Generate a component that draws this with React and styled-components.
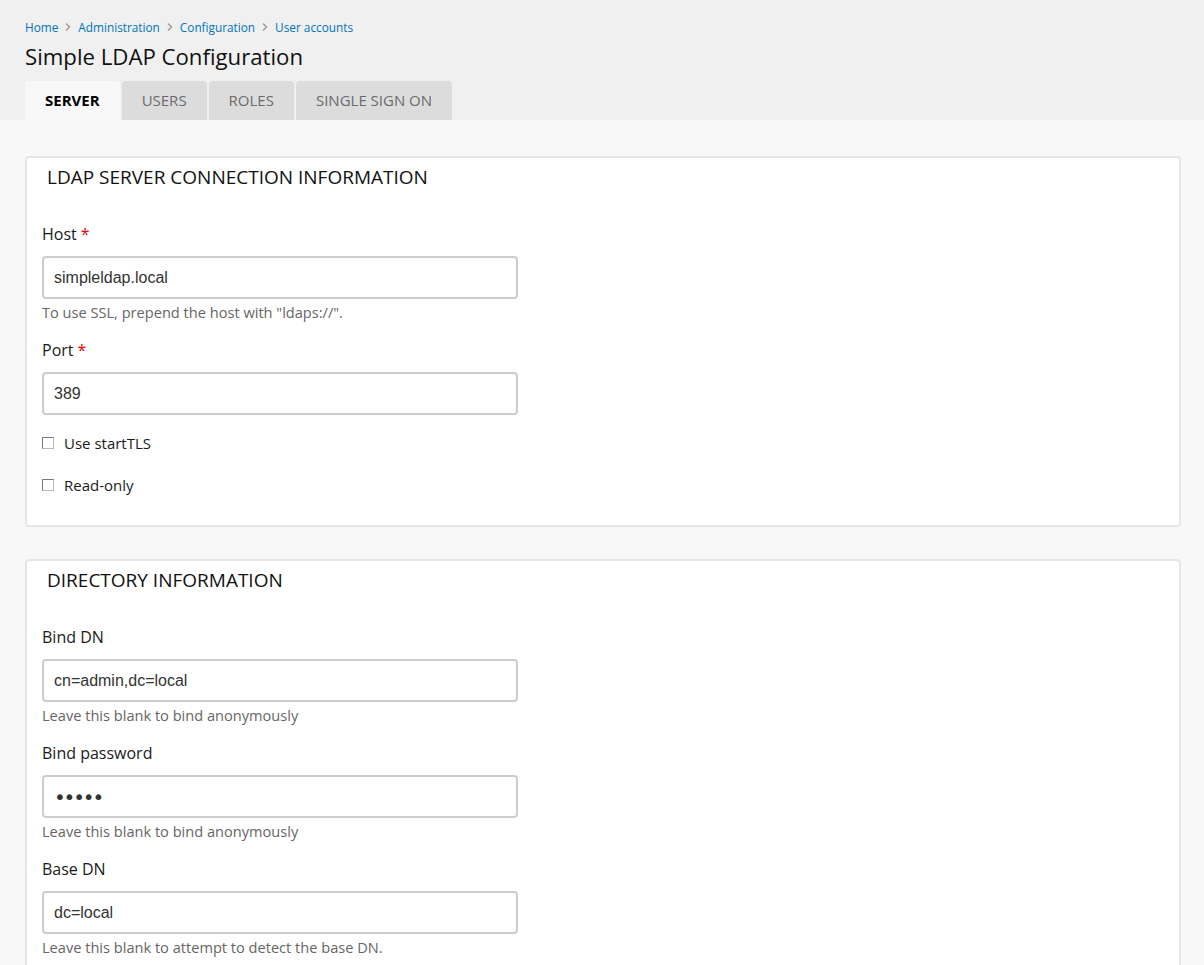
import React from "react";
import styled, { createGlobalStyle } from "styled-components";

const GlobalStyle = createGlobalStyle`
  html, body {
    margin: 0;
    padding: 0;
    background: #f8f8f8;
  }
  body {
    font-family: "Open Sans", "Liberation Sans", sans-serif;
    color: #222;
  }
`;

const Header = styled.header`
  background: #f0f0f0;
  padding: 18px 25px 0;
`;

const Breadcrumb = styled.nav`
  display: flex;
  align-items: center;
  gap: 7px;
  font-size: 11.8px;
  line-height: 18px;
`;

const Crumb = styled.a`
  color: #0074bd;
  text-decoration: none;
`;

const Chevron = styled.svg`
  width: 6px;
  height: 8px;
  flex: none;
`;

const PageTitle = styled.h1`
  margin: 6px 0 9px;
  font-size: 22.2px;
  line-height: 30px;
  font-weight: normal;
  color: #111;
`;

const Tabs = styled.ul`
  display: flex;
  gap: 2px;
  list-style: none;
  margin: 0;
  padding: 0;
`;

const Tab = styled.li`
  height: 39px;
  padding: 0 20px 1px;
  box-sizing: border-box;
  display: flex;
  align-items: center;
  border-radius: 4px 4px 0 0;
  font-size: 15px;
  text-transform: uppercase;
  background: ${(p) => (p.$active ? "#f8f8f8" : "#dcdcdc")};
  color: ${(p) => (p.$active ? "#000" : "#6b6b6b")};
  font-weight: ${(p) => (p.$active ? 700 : 400)};
`;

const Content = styled.main`
  padding: 36px 23px 0 25px;
`;

const Fieldset = styled.section`
  background: #fff;
  border: 2px solid #e6e6e6;
  border-radius: 4px;
  margin-bottom: 32px;
`;

const Legend = styled.div`
  padding: 8px 20px 9px;
  font-size: 19px;
  line-height: 22px;
  text-transform: uppercase;
  color: #111;
`;

const FieldsetBody = styled.div`
  padding: 26px 15px 29px;
`;

const FormItem = styled.div`
  margin-bottom: ${(p) => (p.$tight ? "17px" : "18px")};
  &:last-child {
    margin-bottom: 0;
  }
`;

const Label = styled.label`
  display: block;
  font-size: 16px;
  line-height: 22px;
  margin-bottom: 11px;
  color: #1a1a1a;
`;

const Required = styled.span`
  color: #e00;
  margin-left: 4px;
`;

const TextInput = styled.input`
  display: block;
  box-sizing: border-box;
  width: 476px;
  height: 43px;
  padding: 0 10px;
  border: 2px solid #cdcdcd;
  border-radius: 4px;
  background: #fff;
  font-family: ${(p) =>
    p.type === "password" ? '"DejaVu Sans", sans-serif' : '"Liberation Sans", Arial, sans-serif'};
  font-size: ${(p) => (p.type === "password" ? "20px" : "16px")};
  letter-spacing: ${(p) => (p.type === "password" ? "-2.2px" : "normal")};
  color: #333;
  outline: none;
`;

const Description = styled.div`
  margin-top: 4px;
  font-size: 14.6px;
  line-height: 18px;
  color: #666;
`;

const CheckRow = styled.label`
  display: flex;
  align-items: center;
  gap: 10px;
  font-size: 15px;
  line-height: 22px;
  margin-bottom: 20px;
  color: #1a1a1a;
  &:last-child {
    margin-bottom: 0;
  }
`;

const Checkbox = styled.input`
  appearance: none;
  margin: 0;
  box-sizing: border-box;
  width: 12px;
  height: 12px;
  background: #fff;
  border: 1px solid #777;
  border-right-color: #bbb;
  border-bottom-color: #bbb;
  border-radius: 0;
`;

const crumbs = ["Home", "Administration", "Configuration", "User accounts"];
const tabs = ["Server", "Users", "Roles", "Single sign on"];

const Field = ({ label, required, value, type = "text", description, tight }) => (
  <FormItem $tight={tight}>
    <Label>
      {label}
      {required && <Required>*</Required>}
    </Label>
    <TextInput type={type} defaultValue={value} />
    {description && <Description>{description}</Description>}
  </FormItem>
);

const App = () => (
  <>
    <GlobalStyle />
    <Header>
      <Breadcrumb>
        {crumbs.map((c, i) => (
          <React.Fragment key={c}>
            {i > 0 && (
              <Chevron viewBox="0 0 6 8">
                <path d="M1 0.5 L4.5 4 L1 7.5" fill="none" stroke="#999" strokeWidth="1.4" />
              </Chevron>
            )}
            <Crumb href="#">{c}</Crumb>
          </React.Fragment>
        ))}
      </Breadcrumb>
      <PageTitle>Simple LDAP Configuration</PageTitle>
      <Tabs>
        {tabs.map((t, i) => (
          <Tab key={t} $active={i === 0}>
            {t}
          </Tab>
        ))}
      </Tabs>
    </Header>
    <Content>
      <Fieldset>
        <Legend>LDAP server connection information</Legend>
        <FieldsetBody>
          <Field
            label="Host"
            required
            value="simpleldap.local"
            description={'To use SSL, prepend the host with "ldaps://".'}
          />
          <Field label="Port" required value="389" tight />
          <FormItem>
            <CheckRow>
              <Checkbox type="checkbox" />
              Use startTLS
            </CheckRow>
            <CheckRow>
              <Checkbox type="checkbox" />
              Read-only
            </CheckRow>
          </FormItem>
        </FieldsetBody>
      </Fieldset>
      <Fieldset>
        <Legend>Directory information</Legend>
        <FieldsetBody>
          <Field
            label="Bind DN"
            value="cn=admin,dc=local"
            description="Leave this blank to bind anonymously"
          />
          <Field
            label="Bind password"
            type="password"
            value="admin"
            description="Leave this blank to bind anonymously"
          />
          <Field
            label="Base DN"
            value="dc=local"
            description="Leave this blank to attempt to detect the base DN."
          />
        </FieldsetBody>
      </Fieldset>
    </Content>
  </>
);

export default App;
